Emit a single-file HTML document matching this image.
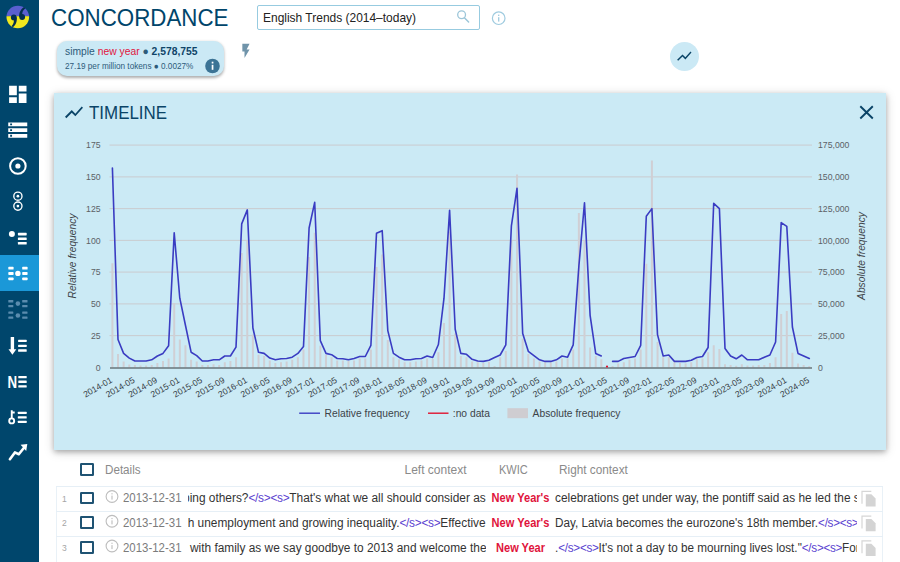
<!DOCTYPE html>
<html lang="en">
<head>
<meta charset="utf-8">
<title>Concordance – English Trends</title>
<style>
*{box-sizing:border-box;margin:0;padding:0}
html,body{width:900px;height:562px;overflow:hidden;background:#fff}
body{position:relative;font-family:"Liberation Sans",sans-serif;color:#333}
.abs{position:absolute}
#side{left:0;top:0;width:38.8px;height:562px;background:#00466c}
#active{left:0;top:255.4px;width:38.8px;height:35.4px;background:#1b98d8}
#side svg{position:absolute;left:0;top:0}
#title{left:51.2px;top:3.9px;font-size:24.1px;line-height:28px;color:#00456b;white-space:nowrap;transform:scaleX(.927);transform-origin:0 0}
#search{left:256.6px;top:5.4px;width:223.8px;height:24.4px;border:1px solid #97cbe0;border-radius:2px;background:#fff}
#search span{position:absolute;left:5.2px;top:3.3px;font-size:12.4px;line-height:16px;color:#222;white-space:nowrap;transform:scaleX(.966);transform-origin:0 0}
#chip{left:57.2px;top:41.4px;width:166.9px;height:35.1px;border-radius:10px;background:#cbe9f5;box-shadow:0 1.5px 3px rgba(0,0,0,.32)}
#chip .l1{position:absolute;left:8px;top:2.6px;font-size:10.8px;line-height:14px;color:#2d5b7a;white-space:nowrap;transform:scaleX(.956);transform-origin:0 0}
#chip .l1 b{color:#0f4468}
#chip .l1 i{font-style:normal;color:#e0143c}
#chip .l2{position:absolute;left:8px;top:19.1px;font-size:8.6px;line-height:12px;color:#2d5b7a;white-space:nowrap;transform:scaleX(.953);transform-origin:0 0}
#tbtn{left:669.5px;top:41.5px;width:29px;height:29px;border-radius:50%;background:#cbe9f5}
#panel{left:54.2px;top:93.3px;width:832.1px;height:356.8px;background:#cbeaf5;box-shadow:0 2px 5px 0 rgba(0,0,0,.24),0 2px 10px 0 rgba(0,0,0,.18)}
#ptitle{left:89.3px;top:101.5px;font-size:18px;line-height:22px;color:#0a4467;white-space:nowrap;transform:scaleX(.94);transform-origin:0 0}
.chart{position:absolute;left:0;top:0}
.hd{font-size:12px;line-height:16px;color:#8a8a8a;white-space:nowrap;top:461.5px;transform-origin:0 0}
.cb{width:13.4px;height:12.9px;border:2px solid #1f5373;border-radius:1.2px;left:80.4px;background:#fff}
#tbl{left:56.4px;top:486.2px;width:826.3px;height:80px;border-left:1px solid #e9f1f7;border-right:1px solid #e9f1f7}
.row{position:absolute;left:0;width:900px;height:24.75px;border-top:1px solid #e6eff6}
.num{position:absolute;left:62px;font-size:8.5px;line-height:10px;color:#a5a5a5}
.date{position:absolute;left:123.2px;font-size:12px;line-height:16px;color:#7b7b7b;white-space:nowrap;transform:scaleX(.953);transform-origin:0 0}
.lc{position:absolute;left:187.5px;width:298.6px;height:20px;overflow:hidden;display:flex;justify-content:flex-end;font-size:12px;line-height:16px;color:#333;white-space:nowrap}
.lc>span{flex:none;white-space:pre;transform:scaleX(.99);transform-origin:100% 0}
.kw{position:absolute;left:470px;width:101px;text-align:center;font-size:12px;line-height:16px;color:#e0143c;font-weight:bold;white-space:nowrap;transform:scaleX(.922);transform-origin:50% 0}
.rc{position:absolute;left:554.6px;width:302px;height:20px;overflow:hidden;font-size:12px;line-height:16px;color:#333;white-space:pre}
.rc>span{display:inline-block;transform:scaleX(.988);transform-origin:0 0}
.tg{color:#5a3fd0;letter-spacing:-.3px}
</style>
</head>
<body>
<div id="side" class="abs"></div>
<div id="active" class="abs"></div>
<!--SIDEICONS-->
<div id="title" class="abs">CONCORDANCE</div>
<div id="search" class="abs"><span>English Trends (2014–today)</span></div>
<!--TOPICONS-->
<div id="chip" class="abs"><div class="l1">simple <i>new year</i> ● <b>2,578,755</b></div><div class="l2">27.19 per million tokens ● 0.0027%</div></div>
<div id="tbtn" class="abs"></div>
<div id="panel" class="abs"></div>
<div id="ptitle" class="abs">TIMELINE</div>
<svg class="chart" width="900" height="562" viewBox="0 0 900 562">
<line x1="109.5" x2="812" y1="335.6" y2="335.6" stroke="#c9c8cc" stroke-width="0.9"/>
<line x1="109.5" x2="812" y1="303.9" y2="303.9" stroke="#c9c8cc" stroke-width="0.9"/>
<line x1="109.5" x2="812" y1="272.1" y2="272.1" stroke="#c9c8cc" stroke-width="0.9"/>
<line x1="109.5" x2="812" y1="240.4" y2="240.4" stroke="#c9c8cc" stroke-width="0.9"/>
<line x1="109.5" x2="812" y1="208.6" y2="208.6" stroke="#c9c8cc" stroke-width="0.9"/>
<line x1="109.5" x2="812" y1="176.9" y2="176.9" stroke="#c9c8cc" stroke-width="0.9"/>
<line x1="109.5" x2="812" y1="145.1" y2="145.1" stroke="#c9c8cc" stroke-width="0.9"/>
<path d="M111.40 367.4V263.3h2V367.4zM117.02 367.4V353.9h2V367.4zM122.64 367.4V361.4h2V367.4zM128.26 367.4V364.6h2V367.4zM133.88 367.4V365.1h2V367.4zM139.50 367.4V365.5h2V367.4zM145.12 367.4V365.5h2V367.4zM150.74 367.4V364.9h2V367.4zM156.36 367.4V363.1h2V367.4zM161.98 367.4V361.0h2V367.4zM167.60 367.4V358.5h2V367.4zM173.22 367.4V303.0h2V367.4zM178.84 367.4V339.5h2V367.4zM184.46 367.4V345.3h2V367.4zM190.08 367.4V359.8h2V367.4zM195.70 367.4V361.4h2V367.4zM201.32 367.4V364.9h2V367.4zM206.94 367.4V364.9h2V367.4zM212.56 367.4V364.2h2V367.4zM218.18 367.4V364.9h2V367.4zM223.80 367.4V362.3h2V367.4zM229.42 367.4V361.0h2V367.4zM235.04 367.4V357.2h2V367.4zM240.66 367.4V253.1h2V367.4zM246.28 367.4V240.4h2V367.4zM251.90 367.4V334.4h2V367.4zM257.52 367.4V354.7h2V367.4zM263.14 367.4V356.0h2V367.4zM268.76 367.4V360.4h2V367.4zM274.38 367.4V363.1h2V367.4zM280.00 367.4V362.3h2V367.4zM285.62 367.4V361.4h2V367.4zM291.24 367.4V359.8h2V367.4zM296.86 367.4V357.2h2V367.4zM302.48 367.4V349.6h2V367.4zM308.10 367.4V256.9h2V367.4zM313.72 367.4V232.8h2V367.4zM319.34 367.4V345.8h2V367.4zM324.96 367.4V354.7h2V367.4zM330.58 367.4V357.2h2V367.4zM336.20 367.4V360.4h2V367.4zM341.82 367.4V360.4h2V367.4zM347.44 367.4V361.0h2V367.4zM353.06 367.4V360.4h2V367.4zM358.68 367.4V358.5h2V367.4zM364.30 367.4V358.5h2V367.4zM369.92 367.4V349.6h2V367.4zM375.54 367.4V267.1h2V367.4zM381.16 367.4V254.4h2V367.4zM386.78 367.4V340.0h2V367.4zM392.40 367.4V357.2h2V367.4zM398.02 367.4V359.3h2V367.4zM403.64 367.4V362.3h2V367.4zM409.26 367.4V362.3h2V367.4zM414.88 367.4V361.4h2V367.4zM420.50 367.4V360.4h2V367.4zM426.12 367.4V358.5h2V367.4zM431.74 367.4V359.1h2V367.4zM437.36 367.4V352.2h2V367.4zM442.98 367.4V322.9h2V367.4zM448.60 367.4V231.5h2V367.4zM454.22 367.4V333.5h2V367.4zM459.84 367.4V356.0h2V367.4zM465.46 367.4V357.2h2V367.4zM471.08 367.4V361.4h2V367.4zM476.70 367.4V362.3h2V367.4zM482.32 367.4V363.0h2V367.4zM487.94 367.4V362.1h2V367.4zM493.56 367.4V366.1h2V367.4zM499.18 367.4V357.2h2V367.4zM504.80 367.4V350.9h2V367.4zM510.42 367.4V240.4h2V367.4zM516.04 367.4V174.4h2V367.4zM521.66 367.4V338.8h2V367.4zM527.28 367.4V353.9h2V367.4zM532.90 367.4V358.5h2V367.4zM538.52 367.4V361.4h2V367.4zM544.14 367.4V362.3h2V367.4zM549.76 367.4V362.3h2V367.4zM555.38 367.4V361.4h2V367.4zM561.00 367.4V358.5h2V367.4zM566.62 367.4V358.5h2V367.4zM572.24 367.4V349.6h2V367.4zM577.86 367.4V213.0h2V367.4zM583.48 367.4V240.4h2V367.4zM589.10 367.4V347.5h2V367.4zM594.72 367.4V356.0h2V367.4zM600.34 367.4V359.3h2V367.4zM611.58 367.4V366.1h2V367.4zM617.20 367.4V363.6h2V367.4zM622.82 367.4V362.3h2V367.4zM628.44 367.4V359.8h2V367.4zM634.06 367.4V358.5h2V367.4zM639.68 367.4V349.6h2V367.4zM645.30 367.4V263.8h2V367.4zM650.92 367.4V160.4h2V367.4zM656.54 367.4V342.0h2V367.4zM662.16 367.4V357.2h2V367.4zM667.78 367.4V357.2h2V367.4zM673.40 367.4V362.3h2V367.4zM679.02 367.4V363.0h2V367.4zM684.64 367.4V363.6h2V367.4zM690.26 367.4V362.3h2V367.4zM695.88 367.4V359.3h2V367.4zM701.50 367.4V358.5h2V367.4zM707.12 367.4V352.2h2V367.4zM712.74 367.4V345.3h2V367.4zM718.36 367.4V349.1h2V367.4zM723.98 367.4V364.2h2V367.4zM729.60 367.4V364.9h2V367.4zM735.22 367.4V365.7h2V367.4zM740.84 367.4V364.2h2V367.4zM746.46 367.4V365.5h2V367.4zM752.08 367.4V365.5h2V367.4zM757.70 367.4V364.9h2V367.4zM763.32 367.4V364.9h2V367.4zM768.94 367.4V363.1h2V367.4zM774.56 367.4V357.2h2V367.4zM780.18 367.4V314.1h2V367.4zM785.80 367.4V311.0h2V367.4zM791.42 367.4V352.8h2V367.4zM797.04 367.4V363.6h2V367.4zM802.66 367.4V364.9h2V367.4zM808.28 367.4V366.1h2V367.4z" fill="#d0cfd4"/>
<line x1="110" x2="812" y1="368.0" y2="368.0" stroke="#69747a" stroke-width="1.4"/>
<path d="M112.4 168.0 L118.0 339.5 L123.6 353.4 L129.3 358.1 L134.9 361.0 L140.5 361.0 L146.1 361.0 L151.7 359.8 L157.4 356.0 L163.0 353.4 L168.6 345.8 L174.2 232.8 L179.8 298.2 L185.5 325.5 L191.1 352.2 L196.7 355.6 L202.3 361.0 L207.9 361.0 L213.6 359.8 L219.2 359.8 L224.8 356.0 L230.4 356.0 L236.0 347.1 L241.7 223.9 L247.3 209.9 L252.9 328.0 L258.5 352.2 L264.1 353.4 L269.8 358.1 L275.4 359.8 L281.0 358.8 L286.6 358.5 L292.2 357.2 L297.9 353.4 L303.5 346.4 L309.1 228.0 L314.7 202.3 L320.3 340.7 L326.0 353.4 L331.6 354.7 L337.2 358.5 L342.8 358.8 L348.4 359.8 L354.1 358.5 L359.7 356.5 L365.3 356.5 L370.9 345.3 L376.5 233.3 L382.2 230.7 L387.8 330.6 L393.4 353.4 L399.0 357.2 L404.6 359.8 L410.3 359.8 L415.9 358.8 L421.5 358.5 L427.1 356.0 L432.7 357.5 L438.4 344.5 L444.0 298.2 L449.6 210.4 L455.2 329.3 L460.8 353.4 L466.5 354.3 L472.1 359.3 L477.7 361.0 L483.3 361.4 L488.9 360.3 L494.6 357.5 L500.2 355.0 L505.8 344.9 L511.4 225.8 L517.0 188.3 L522.7 333.5 L528.3 351.3 L533.9 355.6 L539.5 359.8 L545.1 361.4 L550.8 361.4 L556.4 359.8 L562.0 356.0 L567.6 357.2 L573.2 344.9 L578.9 265.8 L584.5 202.8 L590.1 315.3 L595.7 353.4 L601.3 356.0" fill="none" stroke="#3a3cc2" stroke-width="1.6" stroke-linejoin="round" stroke-linecap="round"/>
<path d="M612.6 361.4 L618.2 361.4 L623.8 358.5 L629.4 357.5 L635.1 356.5 L640.7 345.3 L646.3 216.3 L651.9 208.6 L657.5 334.6 L663.2 356.0 L668.8 355.0 L674.4 361.4 L680.0 361.4 L685.6 361.4 L691.3 360.3 L696.9 357.5 L702.5 356.5 L708.1 347.5 L713.7 203.3 L719.4 208.6 L725.0 348.5 L730.6 356.0 L736.2 358.8 L741.8 355.0 L747.5 359.8 L753.1 359.8 L758.7 359.8 L764.3 357.2 L769.9 355.0 L775.6 342.0 L781.2 222.6 L786.8 226.4 L792.4 327.0 L798.0 353.4 L803.7 356.0 L809.3 358.5" fill="none" stroke="#3a3cc2" stroke-width="1.6" stroke-linejoin="round" stroke-linecap="round"/>
<circle cx="607.0" cy="366.6" r="1.1" fill="#e0142f"/>
<text x="100.6" y="370.5" text-anchor="end" font-size="8.7" fill="#5b6166" font-family="Liberation Sans, sans-serif">0</text>
<text x="818" y="370.5" font-size="8.7" fill="#5b6166" font-family="Liberation Sans, sans-serif">0</text>
<text x="100.6" y="338.8" text-anchor="end" font-size="8.7" fill="#5b6166" font-family="Liberation Sans, sans-serif">25</text>
<text x="818" y="338.8" font-size="8.7" fill="#5b6166" font-family="Liberation Sans, sans-serif">25,000</text>
<text x="100.6" y="307.0" text-anchor="end" font-size="8.7" fill="#5b6166" font-family="Liberation Sans, sans-serif">50</text>
<text x="818" y="307.0" font-size="8.7" fill="#5b6166" font-family="Liberation Sans, sans-serif">50,000</text>
<text x="100.6" y="275.2" text-anchor="end" font-size="8.7" fill="#5b6166" font-family="Liberation Sans, sans-serif">75</text>
<text x="818" y="275.2" font-size="8.7" fill="#5b6166" font-family="Liberation Sans, sans-serif">75,000</text>
<text x="100.6" y="243.5" text-anchor="end" font-size="8.7" fill="#5b6166" font-family="Liberation Sans, sans-serif">100</text>
<text x="818" y="243.5" font-size="8.7" fill="#5b6166" font-family="Liberation Sans, sans-serif">100,000</text>
<text x="100.6" y="211.7" text-anchor="end" font-size="8.7" fill="#5b6166" font-family="Liberation Sans, sans-serif">125</text>
<text x="818" y="211.7" font-size="8.7" fill="#5b6166" font-family="Liberation Sans, sans-serif">125,000</text>
<text x="100.6" y="180.0" text-anchor="end" font-size="8.7" fill="#5b6166" font-family="Liberation Sans, sans-serif">150</text>
<text x="818" y="180.0" font-size="8.7" fill="#5b6166" font-family="Liberation Sans, sans-serif">150,000</text>
<text x="100.6" y="148.2" text-anchor="end" font-size="8.7" fill="#5b6166" font-family="Liberation Sans, sans-serif">175</text>
<text x="818" y="148.2" font-size="8.7" fill="#5b6166" font-family="Liberation Sans, sans-serif">175,000</text>
<text transform="translate(113.0 381.8) rotate(-30)" text-anchor="end" font-size="8.7" fill="#363e45" font-family="Liberation Sans, sans-serif">2014-01</text>
<text transform="translate(135.5 381.8) rotate(-30)" text-anchor="end" font-size="8.7" fill="#363e45" font-family="Liberation Sans, sans-serif">2014-05</text>
<text transform="translate(158.0 381.8) rotate(-30)" text-anchor="end" font-size="8.7" fill="#363e45" font-family="Liberation Sans, sans-serif">2014-09</text>
<text transform="translate(180.4 381.8) rotate(-30)" text-anchor="end" font-size="8.7" fill="#363e45" font-family="Liberation Sans, sans-serif">2015-01</text>
<text transform="translate(202.9 381.8) rotate(-30)" text-anchor="end" font-size="8.7" fill="#363e45" font-family="Liberation Sans, sans-serif">2015-05</text>
<text transform="translate(225.4 381.8) rotate(-30)" text-anchor="end" font-size="8.7" fill="#363e45" font-family="Liberation Sans, sans-serif">2015-09</text>
<text transform="translate(247.9 381.8) rotate(-30)" text-anchor="end" font-size="8.7" fill="#363e45" font-family="Liberation Sans, sans-serif">2016-01</text>
<text transform="translate(270.4 381.8) rotate(-30)" text-anchor="end" font-size="8.7" fill="#363e45" font-family="Liberation Sans, sans-serif">2016-05</text>
<text transform="translate(292.8 381.8) rotate(-30)" text-anchor="end" font-size="8.7" fill="#363e45" font-family="Liberation Sans, sans-serif">2016-09</text>
<text transform="translate(315.3 381.8) rotate(-30)" text-anchor="end" font-size="8.7" fill="#363e45" font-family="Liberation Sans, sans-serif">2017-01</text>
<text transform="translate(337.8 381.8) rotate(-30)" text-anchor="end" font-size="8.7" fill="#363e45" font-family="Liberation Sans, sans-serif">2017-05</text>
<text transform="translate(360.3 381.8) rotate(-30)" text-anchor="end" font-size="8.7" fill="#363e45" font-family="Liberation Sans, sans-serif">2017-09</text>
<text transform="translate(382.8 381.8) rotate(-30)" text-anchor="end" font-size="8.7" fill="#363e45" font-family="Liberation Sans, sans-serif">2018-01</text>
<text transform="translate(405.2 381.8) rotate(-30)" text-anchor="end" font-size="8.7" fill="#363e45" font-family="Liberation Sans, sans-serif">2018-05</text>
<text transform="translate(427.7 381.8) rotate(-30)" text-anchor="end" font-size="8.7" fill="#363e45" font-family="Liberation Sans, sans-serif">2018-09</text>
<text transform="translate(450.2 381.8) rotate(-30)" text-anchor="end" font-size="8.7" fill="#363e45" font-family="Liberation Sans, sans-serif">2019-01</text>
<text transform="translate(472.7 381.8) rotate(-30)" text-anchor="end" font-size="8.7" fill="#363e45" font-family="Liberation Sans, sans-serif">2019-05</text>
<text transform="translate(495.2 381.8) rotate(-30)" text-anchor="end" font-size="8.7" fill="#363e45" font-family="Liberation Sans, sans-serif">2019-09</text>
<text transform="translate(517.6 381.8) rotate(-30)" text-anchor="end" font-size="8.7" fill="#363e45" font-family="Liberation Sans, sans-serif">2020-01</text>
<text transform="translate(540.1 381.8) rotate(-30)" text-anchor="end" font-size="8.7" fill="#363e45" font-family="Liberation Sans, sans-serif">2020-05</text>
<text transform="translate(562.6 381.8) rotate(-30)" text-anchor="end" font-size="8.7" fill="#363e45" font-family="Liberation Sans, sans-serif">2020-09</text>
<text transform="translate(585.1 381.8) rotate(-30)" text-anchor="end" font-size="8.7" fill="#363e45" font-family="Liberation Sans, sans-serif">2021-01</text>
<text transform="translate(607.6 381.8) rotate(-30)" text-anchor="end" font-size="8.7" fill="#363e45" font-family="Liberation Sans, sans-serif">2021-05</text>
<text transform="translate(630.0 381.8) rotate(-30)" text-anchor="end" font-size="8.7" fill="#363e45" font-family="Liberation Sans, sans-serif">2021-09</text>
<text transform="translate(652.5 381.8) rotate(-30)" text-anchor="end" font-size="8.7" fill="#363e45" font-family="Liberation Sans, sans-serif">2022-01</text>
<text transform="translate(675.0 381.8) rotate(-30)" text-anchor="end" font-size="8.7" fill="#363e45" font-family="Liberation Sans, sans-serif">2022-05</text>
<text transform="translate(697.5 381.8) rotate(-30)" text-anchor="end" font-size="8.7" fill="#363e45" font-family="Liberation Sans, sans-serif">2022-09</text>
<text transform="translate(720.0 381.8) rotate(-30)" text-anchor="end" font-size="8.7" fill="#363e45" font-family="Liberation Sans, sans-serif">2023-01</text>
<text transform="translate(742.4 381.8) rotate(-30)" text-anchor="end" font-size="8.7" fill="#363e45" font-family="Liberation Sans, sans-serif">2023-05</text>
<text transform="translate(764.9 381.8) rotate(-30)" text-anchor="end" font-size="8.7" fill="#363e45" font-family="Liberation Sans, sans-serif">2023-09</text>
<text transform="translate(787.4 381.8) rotate(-30)" text-anchor="end" font-size="8.7" fill="#363e45" font-family="Liberation Sans, sans-serif">2024-01</text>
<text transform="translate(809.9 381.8) rotate(-30)" text-anchor="end" font-size="8.7" fill="#363e45" font-family="Liberation Sans, sans-serif">2024-05</text>
<text transform="translate(75.5 256) rotate(-90)" text-anchor="middle" font-size="10.28" font-style="italic" fill="#3d4348" font-family="Liberation Sans, sans-serif">Relative frequency</text>
<text transform="translate(865 256) rotate(-90)" text-anchor="middle" font-size="10.28" font-style="italic" fill="#3d4348" font-family="Liberation Sans, sans-serif">Absolute frequency</text>
<line x1="299.2" x2="320" y1="413.2" y2="413.2" stroke="#3a3cc2" stroke-width="1.4"/>
<text x="324.6" y="416.8" font-size="10.28" fill="#3d4348" font-family="Liberation Sans, sans-serif">Relative frequency</text>
<line x1="428" x2="448.5" y1="413.2" y2="413.2" stroke="#e0142f" stroke-width="1.4"/>
<text x="452.8" y="416.8" font-size="10.28" fill="#3d4348" font-family="Liberation Sans, sans-serif">:no data</text>
<rect x="507.4" y="408.2" width="20.6" height="10" fill="#cfcdd1"/>
<text x="532.6" y="416.8" font-size="10.28" fill="#3d4348" font-family="Liberation Sans, sans-serif">Absolute frequency</text>
</svg>
<div class="abs cb" style="top:462.8px"></div>
<div class="abs hd" style="left:104.6px;transform:scaleX(.97)">Details</div>
<div class="abs hd" style="left:404.5px">Left context</div>
<div class="abs hd" style="left:498.7px;transform:scaleX(.92)">KWIC</div>
<div class="abs hd" style="left:559.2px;transform:scaleX(.983)">Right context</div>
<div id="tbl" class="abs"></div>
<div class="row" style="top:486.20px;left:56.4px;width:826.3px"></div>
<div class="abs num" style="top:493.60px">1</div>
<div class="abs cb" style="top:491.50px"></div>
<div class="abs date" style="top:490.40px">2013-12-31</div>
<div class="abs lc" style="top:490.40px"><span>helping others?<span class="tg">&lt;/s&gt;&lt;s&gt;</span>That's what we all should consider as</span></div>
<div class="abs kw" style="top:490.40px">New Year's</div>
<div class="abs rc" style="top:490.40px"><span style="transform:scaleX(0.988)">celebrations get under way, the pontiff said as he led the solemn</span></div>
<div class="row" style="top:510.95px;left:56.4px;width:826.3px"></div>
<div class="abs num" style="top:518.35px">2</div>
<div class="abs cb" style="top:516.25px"></div>
<div class="abs date" style="top:515.15px">2013-12-31</div>
<div class="abs lc" style="top:515.15px"><span>with unemployment and growing inequality.<span class="tg">&lt;/s&gt;&lt;s&gt;</span>Effective</span></div>
<div class="abs kw" style="top:515.15px">New Year's</div>
<div class="abs rc" style="top:515.15px"><span style="transform:scaleX(0.976)">Day, Latvia becomes the eurozone's 18th member.<span class="tg">&lt;/s&gt;&lt;s&gt;</span>Latvia</span></div>
<div class="row" style="top:535.70px;left:56.4px;width:826.3px"></div>
<div class="abs num" style="top:543.10px">3</div>
<div class="abs cb" style="top:541.00px"></div>
<div class="abs date" style="top:539.90px">2013-12-31</div>
<div class="abs lc" style="top:539.90px"><span>time with family as we say goodbye to 2013 and welcome the</span></div>
<div class="abs kw" style="top:539.90px">New Year</div>
<div class="abs rc" style="top:539.90px"><span style="transform:scaleX(0.977)">.<span class="tg">&lt;/s&gt;&lt;s&gt;</span>It's not a day to be mourning lives lost."<span class="tg">&lt;/s&gt;&lt;s&gt;</span>For</span></div>
<svg class="chart" width="900" height="562" viewBox="0 0 900 562">
<defs><clipPath id="lc"><circle cx="17.8" cy="17" r="11.3"/></clipPath></defs>
<g clip-path="url(#lc)"><rect x="6" y="5" width="24" height="11.2" fill="#5a5fd0"/><rect x="6" y="16.2" width="24" height="13" fill="#f2e81f"/></g>
<circle cx="13.8" cy="17.4" r="2.9" fill="#04304f"/><path d="M16.7 17.2 C17.3 22 15.6 25.2 12.8 27.2 L11.6 26 C13.6 24.2 14.3 21.8 13.6 19.6z" fill="#04304f"/>
<circle cx="22.2" cy="17" r="2.9" fill="#04304f"/><path d="M19.3 17.3 C18.8 12.6 20.8 9.2 24.2 7.1 L25.2 8.4 C22.8 10.2 21.9 12.4 22.4 15z" fill="#04304f"/>
<g transform="translate(6.20 82.75) scale(0.967)" fill="#ffffff" ><path d="M3 13h8V3H3v10zm0 8h8v-6H3v6zm10 0h8V11h-8v10zm0-18v6h8V3h-8z"/></g>
<g transform="translate(6.35 118.70) scale(0.95)" fill="#ffffff" ><path d="M2 20h20v-4H2v4zm2-3h2v2H4v-2zM2 4v4h20V4H2zm4 3H4V5h2v2zm-4 7h20v-4H2v4zm2-3h2v2H4v-2z"/></g>
<circle cx="17.9" cy="166" r="7.8" fill="none" stroke="#ffffff" stroke-width="2"/><circle cx="17.9" cy="166" r="2.6" fill="#ffffff"/>
<circle cx="17.9" cy="196.2" r="4.1" fill="none" stroke="#ffffff" stroke-width="1.35"/><circle cx="17.9" cy="196.2" r="1.35" fill="#ffffff"/>
<circle cx="17.9" cy="206.1" r="4.1" fill="none" stroke="#ffffff" stroke-width="1.35"/><circle cx="17.9" cy="206.1" r="1.35" fill="#ffffff"/>
<circle cx="11.9" cy="234.1" r="3" fill="#ffffff"/>
<rect x="17.9" y="232.8" width="8.8" height="2.6" rx="0.6" fill="#ffffff"/>
<rect x="17.9" y="237.5" width="8.8" height="2.6" rx="0.6" fill="#ffffff"/>
<rect x="17.9" y="241.9" width="8.8" height="2.6" rx="0.6" fill="#ffffff"/>
<rect x="8.3" y="266.8" width="5.3" height="2.8" rx="0.7" fill="#ffffff"/><rect x="22.2" y="266.8" width="5.4" height="2.8" rx="0.7" fill="#ffffff"/>
<rect x="8.3" y="272.1" width="5.3" height="2.8" rx="0.7" fill="#ffffff"/><rect x="22.2" y="272.1" width="5.4" height="2.8" rx="0.7" fill="#ffffff"/>
<rect x="8.3" y="277.5" width="5.3" height="2.8" rx="0.7" fill="#ffffff"/><rect x="22.2" y="277.5" width="5.4" height="2.8" rx="0.7" fill="#ffffff"/>
<circle cx="17.9" cy="273.4" r="2.7" fill="#ffffff"/>
<rect x="8.3" y="300.1" width="5" height="2.4" rx="0.5" fill="#5a8cae"/><rect x="22.2" y="300.1" width="5.3" height="2.4" rx="0.5" fill="#5a8cae"/>
<rect x="8.3" y="304.9" width="5" height="2.4" rx="0.5" fill="#5a8cae"/><rect x="22.2" y="304.9" width="5.3" height="2.4" rx="0.5" fill="#5a8cae"/>
<rect x="8.3" y="311.4" width="5" height="2.4" rx="0.5" fill="#5a8cae"/><rect x="22.2" y="311.4" width="5.3" height="2.4" rx="0.5" fill="#5a8cae"/>
<rect x="8.3" y="316.4" width="5" height="2.4" rx="0.5" fill="#5a8cae"/><rect x="22.2" y="316.4" width="5.3" height="2.4" rx="0.5" fill="#5a8cae"/>
<circle cx="17.9" cy="303.6" r="2.3" fill="#5a8cae"/>
<circle cx="17.9" cy="315.5" r="2.3" fill="#5a8cae"/>
<path d="M10.7 337h3.4v12.2h2.2l-3.9 5.6-3.9-5.6h2.2z" fill="#ffffff"/>
<rect x="18.1" y="339.7" width="8.6" height="2.4" rx="0.5" fill="#ffffff"/>
<rect x="18.1" y="344.7" width="8.6" height="2.4" rx="0.5" fill="#ffffff"/>
<rect x="18.1" y="349.3" width="8.6" height="2.4" rx="0.5" fill="#ffffff"/>
<text x="7.6" y="387.6" font-size="16" font-weight="bold" fill="#ffffff" font-family="Liberation Sans, sans-serif" textLength="9.6" lengthAdjust="spacingAndGlyphs">N</text>
<rect x="18.3" y="376" width="8.4" height="2.3" rx="0.5" fill="#ffffff"/>
<rect x="18.3" y="380.6" width="8.4" height="2.3" rx="0.5" fill="#ffffff"/>
<rect x="18.3" y="385.2" width="8.4" height="2.3" rx="0.5" fill="#ffffff"/>
<circle cx="11.7" cy="420.9" r="2.5" fill="none" stroke="#ffffff" stroke-width="1.9"/><path d="M10.8 410.2h1.9v8.3h-1.9z M12.5 411.6h2.2v1.9h-2.2z" fill="#ffffff"/>
<rect x="17.8" y="411.7" width="8.9" height="2.2" rx="0.5" fill="#ffffff"/>
<rect x="17.8" y="416.3" width="8.9" height="2.2" rx="0.5" fill="#ffffff"/>
<rect x="17.8" y="420.7" width="8.9" height="2.2" rx="0.5" fill="#ffffff"/>
<path d="M9.9 459.2 L14.9 452.4 L18.8 454.2 L23.8 448" fill="none" stroke="#ffffff" stroke-width="2.6" stroke-linecap="round" stroke-linejoin="round"/><path d="M20.6 444.8 L27.3 444.1 L26.2 450.9z" fill="#ffffff"/>
<circle cx="461.6" cy="14.8" r="3.9" fill="none" stroke="#9cc6d9" stroke-width="1.3"/><path d="M464.4 17.7l4.2 4.3" stroke="#9cc6d9" stroke-width="1.5" stroke-linecap="round"/>
<circle cx="498.7" cy="18.2" r="6.3" fill="none" stroke="#9fcbdf" stroke-width="1.2"/><rect x="498.05" y="17.2" width="1.3" height="4.4" fill="#9fcbdf"/><rect x="498.05" y="14.6" width="1.3" height="1.4" fill="#9fcbdf"/>
<circle cx="212.5" cy="66" r="7.3" fill="#3b7395"/><rect x="211.7" y="64.8" width="1.7" height="5" fill="#fff"/><rect x="211.7" y="61.7" width="1.7" height="1.8" fill="#fff"/>
<g transform="translate(237.3 42.2) scale(0.72)"><path d="M7 2v11h3v9l7-12h-4l4-8z" fill="#7094aa"/></g>
<g transform="translate(675.66 47.56) scale(0.72)" fill="#0a4467"><path d="M3.5 18.49l6-6.01 4 4L22 6.92l-1.41-1.41-7.09 7.97-4-4L2 16.99z"/></g>
<g transform="translate(63.20 101.50) scale(0.9)" fill="#0a4467"><path d="M3.5 18.49l6-6.01 4 4L22 6.92l-1.41-1.41-7.09 7.97-4-4L2 16.99z"/></g>
<path d="M860.3 106.3l12.5 12.2M872.8 106.3l-12.5 12.2" stroke="#0a4467" stroke-width="1.9" fill="none"/>
<circle cx="112" cy="496.50" r="5.9" fill="none" stroke="#bdbdbd" stroke-width="1.1"/><rect x="111.45" y="495.60" width="1.1" height="4" fill="#bdbdbd"/><rect x="111.45" y="493.20" width="1.1" height="1.2" fill="#bdbdbd"/>
<path d="M862 503.70V491.40h9.3" fill="none" stroke="#d6d6d6" stroke-width="1.2"/><path d="M865.8 494.20h5.6l4.2 4.2v8.1h-9.8z" fill="#d4d4d4"/>
<circle cx="112" cy="521.25" r="5.9" fill="none" stroke="#bdbdbd" stroke-width="1.1"/><rect x="111.45" y="520.35" width="1.1" height="4" fill="#bdbdbd"/><rect x="111.45" y="517.95" width="1.1" height="1.2" fill="#bdbdbd"/>
<path d="M862 528.45V516.15h9.3" fill="none" stroke="#d6d6d6" stroke-width="1.2"/><path d="M865.8 518.95h5.6l4.2 4.2v8.1h-9.8z" fill="#d4d4d4"/>
<circle cx="112" cy="546.00" r="5.9" fill="none" stroke="#bdbdbd" stroke-width="1.1"/><rect x="111.45" y="545.10" width="1.1" height="4" fill="#bdbdbd"/><rect x="111.45" y="542.70" width="1.1" height="1.2" fill="#bdbdbd"/>
<path d="M862 553.20V540.90h9.3" fill="none" stroke="#d6d6d6" stroke-width="1.2"/><path d="M865.8 543.70h5.6l4.2 4.2v8.1h-9.8z" fill="#d4d4d4"/>
</svg>
</body>
</html>
